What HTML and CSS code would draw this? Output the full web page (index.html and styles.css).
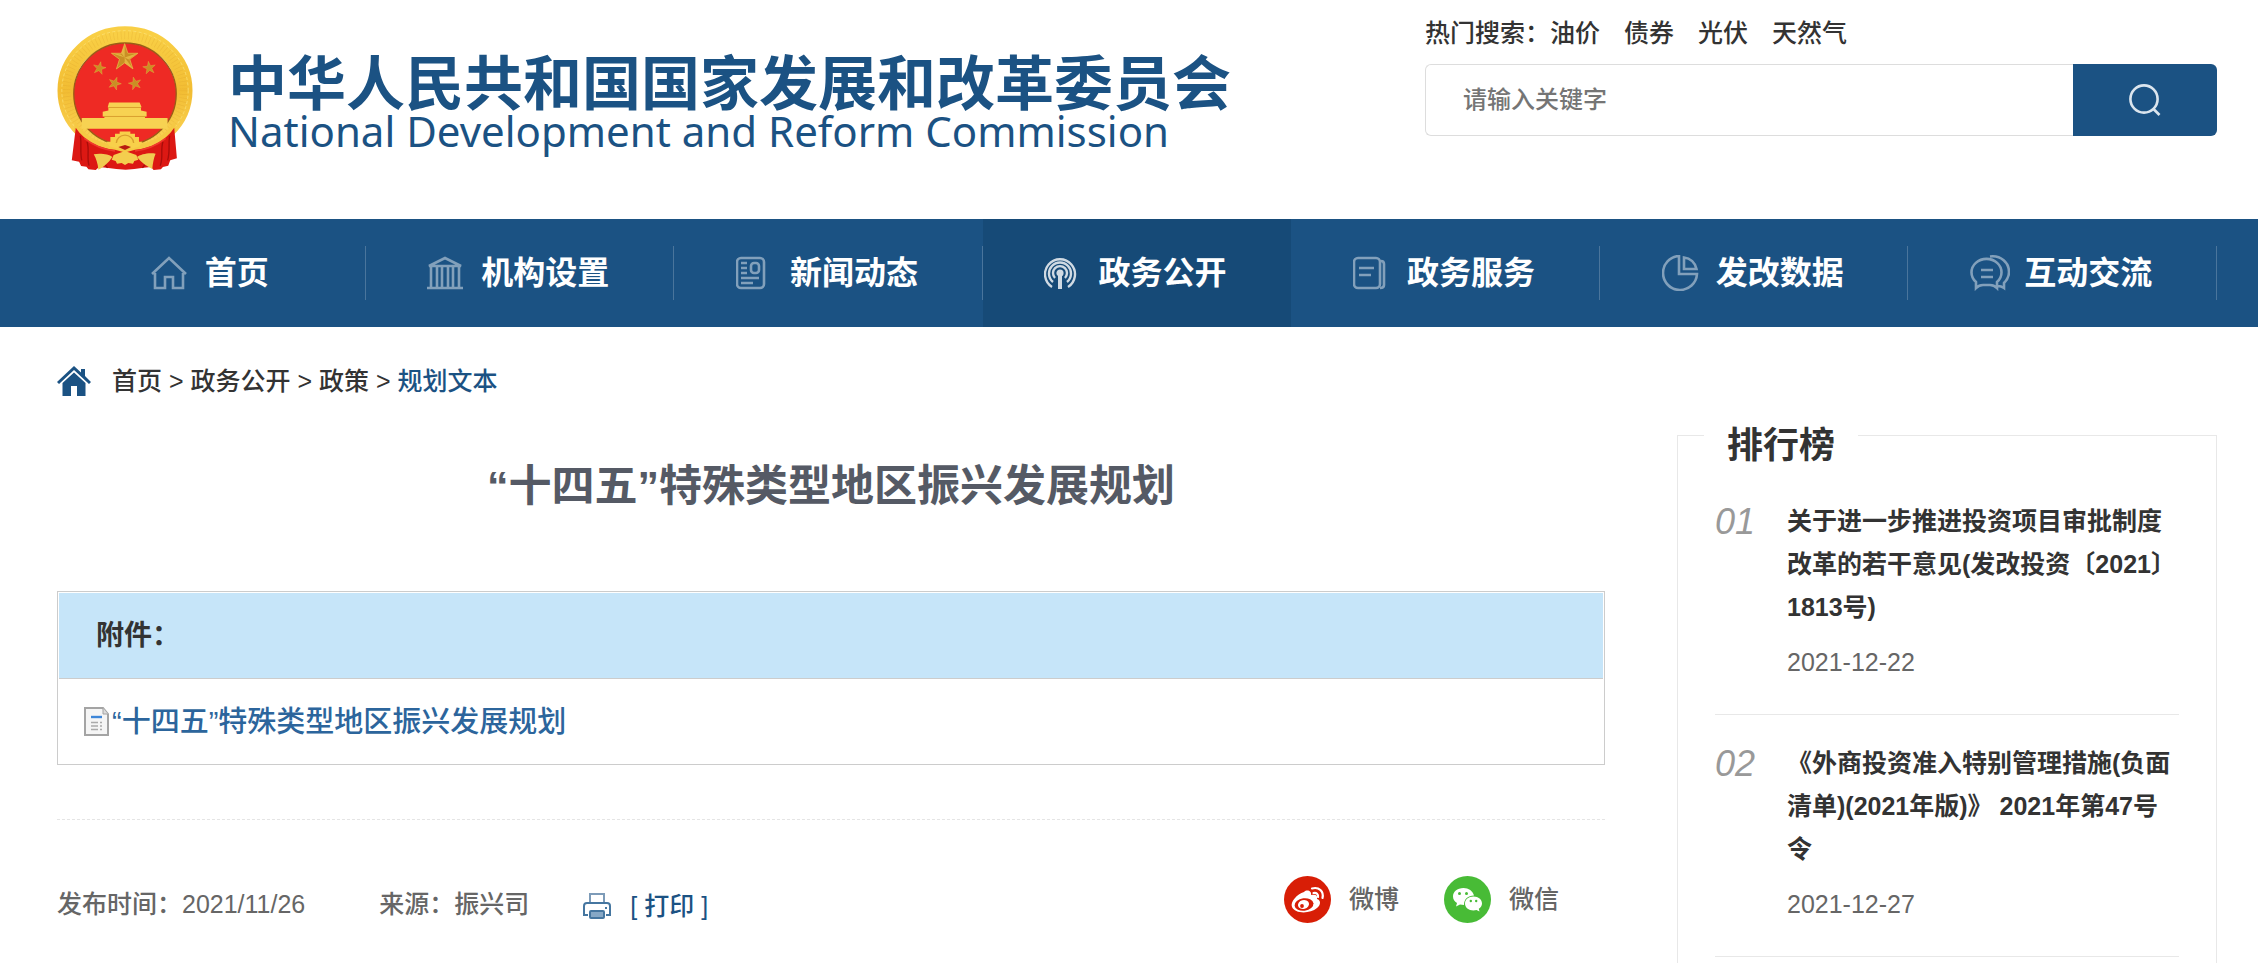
FILE: index.html
```html
<!DOCTYPE html>
<html lang="zh-CN">
<head>
<meta charset="utf-8">
<meta name="viewport" content="width=device-width, initial-scale=1">
<title>“十四五”特殊类型地区振兴发展规划</title>
<link rel="stylesheet" href="styles.css">
</head>
<body>
<header class="header wrap">
  <a class="brand" href="#">
    <svg class="emblem" viewBox="22 32 408 436" aria-hidden="true">
      <defs>
        <linearGradient id="gold" x1="0" y1="0" x2="0" y2="1">
          <stop offset="0" stop-color="#f9cf45"/><stop offset=".5" stop-color="#f2bd33"/><stop offset="1" stop-color="#fbd558"/>
        </linearGradient>
        <path id="star" d="M0-10 2.3-3.1 9.5-3.1 3.7 1.2 5.9 8.1 0 3.8-5.9 8.1-3.7 1.2-9.5-3.1-2.3-3.1Z"/>
      </defs>
      <ellipse cx="226" cy="226" rx="178" ry="168" fill="none" stroke="url(#gold)" stroke-width="50"/>
      <ellipse cx="226" cy="226" rx="176" ry="166" fill="none" stroke="#dc9f2c" stroke-width="24" stroke-dasharray="2 9" opacity=".3"/>
      <ellipse cx="226" cy="226" rx="190" ry="180" fill="none" stroke="#fbe27a" stroke-width="3" stroke-dasharray="9 7" opacity=".7"/>
      <ellipse cx="226" cy="236" rx="154" ry="153" fill="#ee2a24" stroke="#9a5d16" stroke-width="4"/>
      <g fill="#c98f24" stroke="#e9c04a" stroke-width=".5">
        <use href="#star" transform="translate(225 127) scale(4.2)"/>
        <use href="#star" transform="translate(149 159) rotate(12) scale(2)"/>
        <use href="#star" transform="translate(299 158) rotate(-8) scale(2)"/>
        <use href="#star" transform="translate(195 205) rotate(20) scale(2)"/>
        <use href="#star" transform="translate(256 205) rotate(-15) scale(2)"/>
      </g>
      <path d="M225 87v40l-10-13ZM225 127l38-13-26 19ZM225 127l24 32-24-16ZM225 127l-38-13 26 4Z" fill="#f0c850" opacity=".65"/>
      <path d="M178 262h92l6 14h-2v10l17 4v14h-5v5h68v32H96v-32h68v-5h-5v-14l17-4v-10h-2Z" fill="#f7d252"/>
      <path d="M176 277h98M162 304h126" stroke="#d9a02e" stroke-width="3"/>
      <path d="M76 318c24 40 66 66 114 70h72c48-6 90-30 114-70l4 30c-30 44-80 66-124 68l-30 6-30-6c-50-4-96-24-124-66Z" fill="#f5c944"/>
      <path d="M78 338c26 40 70 62 118 66l30 8 30-8c48-4 92-26 118-66l8 92-20 6-6 16-16 4-6 7-22 2-8-9-22 2-28 4-26 2-28-2-30-4-22-2-10 9-22-2-6-8-16-2-6-13-22-4Z" fill="#dc1813"/>
      <path d="M92 362c4 30-2 50 4 74M112 380c8 26-2 46 6 72M360 362c-4 30 2 50-6 74M340 380c-8 26 2 46-8 72M160 434c8 8 4 18 14 24M292 434c-8 8-4 18-14 24" fill="none" stroke="#a80d0b" stroke-width="4"/>
      <path d="M104 370c30 24 60 34 92 38M348 370c-30 24-60 34-92 38" fill="none" stroke="#f03a2c" stroke-width="5"/>
      <path d="M132 418c20-4 46 0 56 8-12 18-26 30-42 38-2-18-6-32-14-46ZM318 416c-20-4-46 2-56 10 14 18 30 28 46 36 2-18 4-32 10-46Z" fill="#f0cc52"/>
      <path d="M196 356h14v-7h32v7h14v10h12v14h10l-8 14-22 6-22-4-22 4-24-6-10-14h12v-14h14Z" fill="#f8d04a"/>
      <path d="M200 384a26 24 0 0 1 52 0" fill="none" stroke="#d9a02e" stroke-width="4"/>
      <path d="M192 420l34-12 34 12 6 14-12 4-4 8-14-2-10 6-10-6-14 2-4-8-12-4Z" fill="#f4ce4e"/>
      <path d="M206 396l20-6 18 6-18 9Z" fill="#b81c10"/>
    </svg>
    <span class="brand-text">
      <span class="brand-cn">中华人民共和国国家发展和改革委员会</span>
      <span class="brand-en">National Development and Reform Commission</span>
    </span>
  </a>
  <div class="search-area">
    <p class="hot"><span>热门搜索：</span><a href="#">油价</a><a href="#">债券</a><a href="#">光伏</a><a href="#">天然气</a></p>
    <form class="search" role="search">
      <input class="search-input" type="text" placeholder="请输入关键字" aria-label="请输入关键字">
      <button class="search-btn" type="button" aria-label="搜索">
        <svg viewBox="0 0 32 32" width="32" height="32" fill="none" stroke="#dbe5ee" stroke-width="2.6"><circle cx="15" cy="15" r="13.6"/><path d="m24.5 25 6 6"/></svg>
      </button>
    </form>
  </div>
</header>

<nav class="nav">
  <ul class="nav-list wrap">
    <li><a href="#"><svg class="nav-icon" viewBox="0 0 40 36"><path d="M1 19 18 3l17 16M4 18v15h10V22h8v11h10V18"/></svg>首页</a></li>
    <li><a href="#"><svg class="nav-icon" viewBox="0 0 40 36"><path d="M2 11 18 3l16 8ZM0 33h36M4 12v20M10 12v20M15 12v20M21 12v20M26 12v20M32 12v20"/></svg>机构设置</a></li>
    <li><a href="#"><svg class="nav-icon" viewBox="0 0 40 36"><rect x="1" y="3" width="27" height="30" rx="4"/><rect x="15" y="8" width="8" height="10" rx="3"/><path d="M5 8h6M5 13h6M5 18h6M5 23h18M5 28h12"/></svg>新闻动态</a></li>
    <li class="active"><a href="#"><svg class="nav-icon" viewBox="0 0 40 36"><path d="M8 32A15 15 0 1 1 24 32M9 27A11 11 0 1 1 23 27M11 23A7 7 0 1 1 21 23"/><path d="M16 19v15" stroke-width="4"/><circle cx="16" cy="18" r="2.4" fill="#fff"/></svg>政务公开</a></li>
    <li><a href="#"><svg class="nav-icon" viewBox="0 0 40 36"><rect x="1" y="3" width="26" height="30" rx="4"/><path d="M28 6q3 0 3 3v21q0 3-4 3M6 13h15M6 20h12"/></svg>政务服务</a></li>
    <li><a href="#"><svg class="nav-icon" viewBox="0 0 40 36"><path d="M17 1a17 17 0 1 0 18 18H17ZM22 2.500V14h12.500A14 14 0 0 0 22 2.500Z"/></svg>发改数据</a></li>
    <li><a href="#"><svg class="nav-icon" viewBox="0 0 40 36"><path d="M6 33V27A15 13.500 0 1 1 27 27V33Q24 30 20 30H13Q9 30 6 33ZM20 1.500C31 0 39 8 39 17Q39 23 34 28V33Q31 31 28 31M11 15h12M11 22h12"/></svg>互动交流</a></li>
  </ul>
</nav>

<div class="content wrap">
  <div class="crumbs">
    <svg class="crumb-icon" viewBox="0 0 34 30" aria-hidden="true"><path d="M17 0 24 6.500V3h4v7l6 6-2 2L17 4 2 18 0 16ZM17 6.500 28.500 17v13H20V20h-6v10H5.500V17Z" fill="#1b5283"/></svg>
    <p><a href="#">首页</a> &gt; <a href="#">政务公开</a> &gt; <a href="#">政策</a> &gt; <a class="current" href="#">规划文本</a></p>
  </div>
  <div class="columns">
    <main class="article">
      <h1>“十四五”特殊类型地区振兴发展规划</h1>
      <section class="attach">
        <h2>附件：</h2>
        <a class="attach-link" href="#"><svg viewBox="0 0 25 29" width="25" height="29" aria-hidden="true"><path d="M1 1h18l5 6v21H1Z" fill="#f5f5f5" stroke="#a4a4a4" stroke-width="2"/><path d="M19 1v6h5" fill="#ddd" stroke="#a4a4a4"/><path d="M7 10h11" stroke="#3e86d8" stroke-width="2.400"/><path d="M7 15.500h7m2 0h2M7 19h7m2 0h2M7 22.500h7m2 0h2" stroke="#aaa" stroke-width="1.500"/></svg>“十四五”特殊类型地区振兴发展规划</a>
      </section>
      <footer class="meta">
        <div class="meta-left">
          <span class="published">发布时间：2021/11/26</span>
          <span class="source">来源：振兴司</span>
          <a class="print" href="#"><svg viewBox="0 0 28 26" width="28" height="26" fill="none" stroke="#4576a0" stroke-width="2" aria-hidden="true"><path d="M7 10V1h14v9" stroke="#7d9bb8"/><path d="M5 22H1V13q0-3 3-3h20q3 0 3 3v9h-4"/><path d="M23 14v2"/><rect x="7" y="18" width="14" height="7" rx="1" fill="#86a8c6"/></svg>[ 打印 ]</a>
        </div>
        <div class="share">
          <a href="#"><svg viewBox="0 0 47 47" width="47" height="47" aria-hidden="true"><circle cx="23.500" cy="23.500" r="23.500" fill="#d81e06"/><path d="M20 16c3-3 8-1 7 3 4-1 7 0 6 4 4 1 4 6 0 9-7 6-22 6-25-1-2-5 5-13 12-15Z" fill="#fff"/><ellipse cx="20" cy="28.500" rx="9.500" ry="6.300" fill="#d81e06" transform="rotate(-7 20 28.500)"/><ellipse cx="19.500" cy="28.500" rx="5.600" ry="4.500" fill="#fff" transform="rotate(-15 19.500 28.500)"/><circle cx="18" cy="30" r="1.900" fill="#d81e06"/><path d="M28 12.500c7-2 12 3 10.500 9.500M29.500 17c3-.8 5 1.500 4.500 4" fill="none" stroke="#fff" stroke-width="2.200" stroke-linecap="round"/></svg>微博</a>
          <a href="#"><svg viewBox="0 0 47 47" width="47" height="47" aria-hidden="true"><circle cx="23.500" cy="23.500" r="23.500" fill="#48bb36"/><path d="M19.500 12C13 12 9 16 9 20.500c0 3 1.500 5 4 6.500l-1 3.500 4-2 4 .5c0-6 4-9.500 10-9.500-1-4.500-5.500-7.500-10.500-7.500Z" fill="#fff"/><path d="M29.500 20.500c-5 0-8.500 3-8.500 7s3.500 7 8.500 7l3-.5 3 1.500-.7-2.700c2-1.300 3.200-3.200 3.200-5.300 0-4-3.500-7-8.500-7Z" fill="#fff"/><g fill="#48bb36"><circle cx="15.500" cy="17.500" r="1.500"/><circle cx="22.500" cy="17.500" r="1.500"/><circle cx="26.800" cy="25" r="1.200"/><circle cx="32.200" cy="25" r="1.200"/></g></svg>微信</a>
        </div>
      </footer>
    </main>
    <aside class="rank">
      <h2>排行榜</h2>
      <ol>
        <li><em>01</em><div><a href="#">关于进一步推进投资项目审批制度改革的若干意见(发改投资〔2021〕1813号)</a><time>2021-12-22</time></div></li>
        <li><em>02</em><div><a href="#">《外商投资准入特别管理措施(负面清单)(2021年版)》 2021年第47号令</a><time>2021-12-27</time></div></li>
      </ol>
    </aside>
  </div>
</div>
</body>
</html>
```
FILE: styles.css
```css
* { box-sizing: border-box; }
body, h1, h2, p, ul, ol { margin: 0; padding: 0; }
body {
  background: #fff;
  color: #333;
  font-family: "Liberation Sans", "Noto Sans CJK SC", sans-serif;
  font-size: 25px;
  font-weight: 500;
  line-height: 36px;
}
a { color: inherit; text-decoration: none; }
ul, ol { list-style: none; }
svg { flex: none; display: block; }
.wrap { padding-left: 57px; padding-right: 41px; }

.header { display: flex; justify-content: space-between; height: 219px; }
.brand { display: flex; align-items: flex-start; gap: 35px; padding-top: 26px; color: #1b5283; }
.emblem { width: 136px; height: 145px; }
.brand-text { display: flex; flex-direction: column; padding-top: 29px; white-space: nowrap; }
.brand-cn { font-size: 59px; font-weight: 700; line-height: 60px; }
.brand-en { font-family: "Noto Sans", sans-serif; font-size: 42px; font-weight: 400; line-height: 32px; }

.search-area { width: 792px; padding-top: 15px; }
.hot { display: flex; gap: 24px; }
.hot span { margin-right: -24px; }
.search { display: flex; height: 72px; margin-top: 13px; }
.search-input {
  flex: 1;
  min-width: 0;
  border: 1px solid #ddd;
  border-right: 0;
  border-radius: 6px 0 0 6px;
  padding: 0 37px;
  font: inherit;
  font-size: 24px;
}
.search-input::placeholder { color: #757575; }
.search-btn {
  display: grid;
  place-items: center;
  width: 144px;
  padding: 0;
  border: 0;
  border-radius: 0 6px 6px 0;
  background: #1b5283;
}

.nav { background: #1b5283; }
.nav-list { display: grid; grid-template-columns: repeat(7, 1fr); }
.nav-list li { display: flex; align-items: center; height: 108px; }
.nav-list a {
  display: flex;
  flex: 1;
  align-items: center;
  justify-content: center;
  height: 54px;
  padding-right: 2px;
  border-right: 1px solid #4a759c;
  color: #fff;
  font-size: 32px;
  font-weight: 700;
}
.nav-list .active { background: #164a77; }
.nav-list .active a { border-color: transparent; }
.nav-icon {
  width: 40px;
  height: 36px;
  margin-right: 14px;
  fill: none;
  stroke: #fff;
  stroke-width: 2.6;
  opacity: .45;
}
.active .nav-icon { opacity: .8; stroke-width: 2.4; }

.crumbs { display: flex; align-items: center; gap: 21px; height: 108px; }
.crumb-icon { width: 34px; height: 30px; }
.current { color: #1b5283; }

.columns { display: flex; align-items: flex-start; gap: 72px; }
.article { flex: 1; min-width: 0; }
h1 { padding-top: 19px; color: #555a65; font-size: 43px; line-height: 64px; text-align: center; }
.attach { margin-top: 73px; border: 1px solid #ccc; }
.attach h2 {
  margin: 1px 1px 0;
  padding: 0 37px;
  border-bottom: 1px solid #ccc;
  background: #c6e5f9;
  font-size: 28px;
  line-height: 85px;
}
.attach-link {
  display: flex;
  align-items: center;
  gap: 3px;
  height: 85px;
  padding-left: 26px;
  color: #2c659c;
  font-size: 29px;
}
.meta {
  display: flex;
  justify-content: space-between;
  margin-top: 54px;
  padding-top: 54px;
  border-top: 1px dashed #e5e5e5;
  color: #666;
}
.meta-left { display: flex; align-items: center; padding-top: 9px; }
.source { margin-left: 74px; }
.print { display: flex; align-items: center; gap: 19px; margin-left: 54px; padding-top: 5px; color: #1b5283; }
.share { display: flex; gap: 45px; padding-right: 46px; }
.share a { display: flex; align-items: center; gap: 18px; }

.rank {
  width: 540px;
  min-height: 528px;
  padding: 0 37px;
  border: 1px solid #e8e8e8;
  border-bottom: 0;
}
.rank h2 {
  width: 154px;
  margin: -17px 0 0 -11px;
  padding-left: 23px;
  background: #fff;
  font-size: 36px;
  line-height: 54px;
}
.rank li { display: flex; padding: 27px 0 30px; border-bottom: 1px solid #e8e8e8; }
.rank em { width: 72px; color: #999; font-size: 36px; line-height: 43px; }
.rank div { flex: 1; }
.rank li a { display: block; font-weight: 700; line-height: 43px; }
.rank time { display: block; margin-top: 12px; color: #666; line-height: 43px; }
```
